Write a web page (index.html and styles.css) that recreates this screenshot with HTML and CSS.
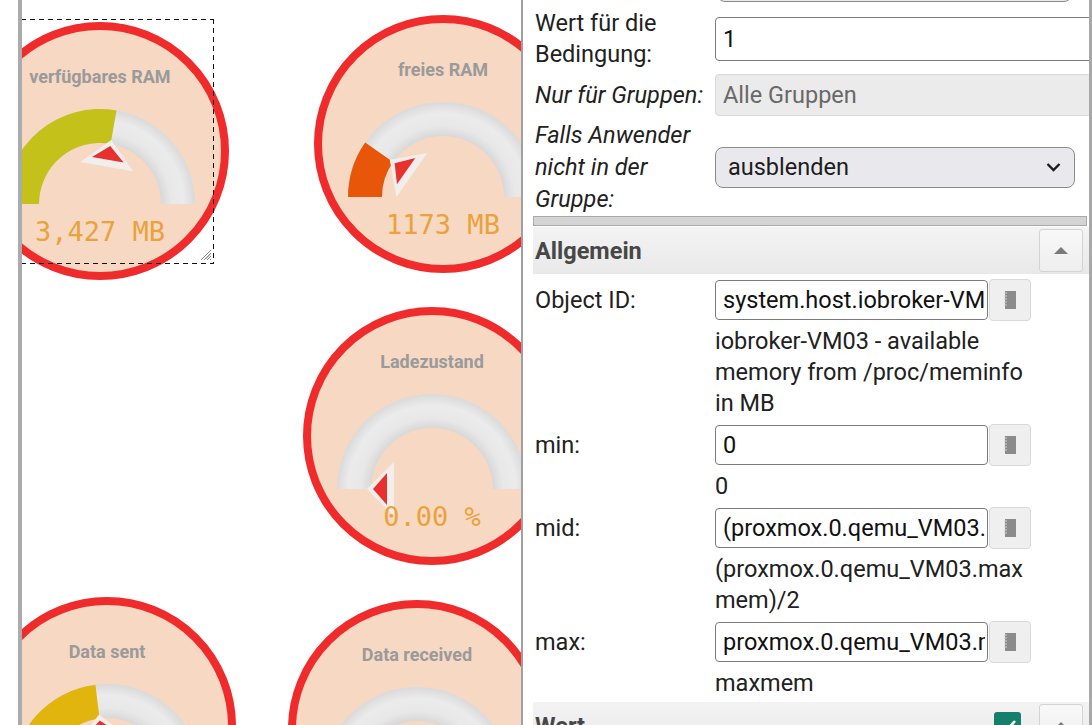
FILE: index.html
```html
<!DOCTYPE html>
<html lang="de">
<head>
    <meta charset="UTF-8">
    <title>vis Editor - Gauges</title>
    <link rel="stylesheet" href="styles.css">
</head>
<body>
    <svg class="defs" width="0" height="0" aria-hidden="true">
        <defs>
            <radialGradient id="track" gradientUnits="userSpaceOnUse" cx="95" cy="95" r="95">
                <stop offset="0.64" stop-color="#d8d8d8"/>
                <stop offset="0.75" stop-color="#e8e8e8"/>
                <stop offset="0.88" stop-color="#ebebeb"/>
                <stop offset="1" stop-color="#dadada"/>
            </radialGradient>
        </defs>
    </svg>

    <div class="gutter"></div>
    <div class="rail"></div>

    <!-- widget canvas -->
    <div class="canvas">
        <div class="gauge g1">
            <div class="gauge-title">verfügbares RAM</div>
            <svg class="gauge-arc" width="190" height="95" viewBox="0 0 190 95">
                <path class="track" d="M0 95 A95 95 0 0 1 190 95 L156 95 A61 61 0 0 0 34 95 Z"/>
                <path fill="#c5c11b" d="M0 95 A95 95 0 0 1 111.5 1.4 L105.6 34.9 A61 61 0 0 0 34 95 Z"/>
                <g transform="rotate(10 95 95)">
                    <polygon class="needle-halo" points="95,30 68,57 122,57"/>
                    <polygon class="needle" points="95,36 79,50 111,50"/>
                </g>
            </svg>
            <div class="gauge-value">3,427 MB</div>
        </div>

        <div class="gauge g2">
            <div class="gauge-title">freies RAM</div>
            <svg class="gauge-arc" width="190" height="95" viewBox="0 0 190 95">
                <path class="track" d="M0 95 A95 95 0 0 1 190 95 L156 95 A61 61 0 0 0 34 95 Z"/>
                <path fill="#e8560a" d="M0 95 A95 95 0 0 1 17.2 40.5 L45 60 A61 61 0 0 0 34 95 Z"/>
                <g transform="rotate(-55 95 95)">
                    <polygon class="needle-halo" points="95,30 68,57 122,57"/>
                    <polygon class="needle" points="95,36 79,50 111,50"/>
                </g>
            </svg>
            <div class="gauge-value">1173 MB</div>
        </div>

        <div class="gauge g3">
            <div class="gauge-title">Ladezustand</div>
            <svg class="gauge-arc" width="190" height="95" viewBox="0 0 190 95">
                <path class="track" d="M0 95 A95 95 0 0 1 190 95 L156 95 A61 61 0 0 0 34 95 Z"/>
                <g transform="rotate(-90 95 95)">
                    <polygon class="needle-halo" points="95,30 68,57 122,57"/>
                    <polygon class="needle" points="95,36 79,50 111,50"/>
                </g>
            </svg>
            <div class="gauge-value">0.00 %</div>
        </div>

        <div class="gauge g4">
            <div class="gauge-title">Data sent</div>
            <svg class="gauge-arc" width="190" height="95" viewBox="0 0 190 95">
                <path class="track" d="M0 95 A95 95 0 0 1 190 95 L156 95 A61 61 0 0 0 34 95 Z"/>
                <path fill="#e2b50e" d="M0 95 A95 95 0 0 1 83.4 0.7 L87.6 34.5 A61 61 0 0 0 34 95 Z"/>
                <g transform="rotate(-7 95 95)">
                    <polygon class="needle-halo" points="95,30 68,57 122,57"/>
                    <polygon class="needle" points="95,36 79,50 111,50"/>
                </g>
            </svg>
            <div class="gauge-value">0 kB</div>
        </div>

        <div class="gauge g5">
            <div class="gauge-title">Data received</div>
            <svg class="gauge-arc" width="190" height="95" viewBox="0 0 190 95">
                <path class="track" d="M0 95 A95 95 0 0 1 190 95 L156 95 A61 61 0 0 0 34 95 Z"/>
                <g transform="rotate(-80 95 95)">
                    <polygon class="needle-halo" points="95,30 68,57 122,57"/>
                    <polygon class="needle" points="95,36 79,50 111,50"/>
                </g>
            </svg>
            <div class="gauge-value">0 kB</div>
        </div>

        <!-- selected widget frame -->
        <div class="selection">
            <svg class="resize-handle" width="12" height="12" viewBox="0 0 12 12">
                <path d="M11 1 L1 11 M11 4 L4 11 M11 7 L7 11 M11 10 L10 11 M9 3 L3 9 M10 5.5 L5.5 10" stroke="#8a8a8a" stroke-width="1"/>
            </svg>
        </div>
    </div>

    <!-- attributes panel -->
    <div class="panel">
        <div class="row row-cut">
            <span></span>
            <div class="select select-cut"></div>
        </div>

        <div class="row row-cond">
            <label class="label">Wert für die<br>Bedingung:</label>
            <input class="input input-wide" type="text" value="1">
        </div>

        <div class="row row-groups">
            <label class="label italic">Nur für Gruppen:</label>
            <input class="input input-wide input-disabled" type="text" value="Alle Gruppen" disabled>
        </div>

        <div class="row row-hide">
            <label class="label italic">Falls Anwender<br>nicht in der<br>Gruppe:</label>
            <div class="select select-hide">
                <span>ausblenden</span>
                <svg width="15" height="10" viewBox="0 0 15 10">
                    <polyline points="1.5,2 7.5,8 13.5,2" fill="none" stroke="#1c1c1c" stroke-width="2.4"/>
                </svg>
            </div>
        </div>

        <div class="bar"></div>

        <div class="section">
            <span class="section-title">Allgemein</span>
            <span class="toggle"><span class="caret"></span></span>
        </div>

        <div class="field">
            <div class="row">
                <label class="label">Object ID:</label>
                <div class="control">
                    <input class="input input-id" type="text" value="system.host.iobroker-VM03.mem.available">
                    <span class="picker">
                        <svg width="14" height="20" viewBox="0 0 14 20">
                            <rect x="2" y="1" width="11" height="18" fill="#8b8b8b"/>
                            <path d="M1 3h3M1 6h3M1 9h3M1 12h3M1 15h3" stroke="#d0d0d0" stroke-width="1"/>
                        </svg>
                    </span>
                </div>
            </div>
            <div class="hint">iobroker-VM03 - available<br>memory from /proc/meminfo<br>in MB</div>
        </div>

        <div class="field">
            <div class="row">
                <label class="label">min:</label>
                <div class="control">
                    <input class="input input-id" type="text" value="0">
                    <span class="picker">
                        <svg width="14" height="20" viewBox="0 0 14 20">
                            <rect x="2" y="1" width="11" height="18" fill="#8b8b8b"/>
                            <path d="M1 3h3M1 6h3M1 9h3M1 12h3M1 15h3" stroke="#d0d0d0" stroke-width="1"/>
                        </svg>
                    </span>
                </div>
            </div>
            <div class="hint">0</div>
        </div>

        <div class="field">
            <div class="row">
                <label class="label">mid:</label>
                <div class="control">
                    <input class="input input-id" type="text" value="(proxmox.0.qemu_VM03.maxmem)/2">
                    <span class="picker">
                        <svg width="14" height="20" viewBox="0 0 14 20">
                            <rect x="2" y="1" width="11" height="18" fill="#8b8b8b"/>
                            <path d="M1 3h3M1 6h3M1 9h3M1 12h3M1 15h3" stroke="#d0d0d0" stroke-width="1"/>
                        </svg>
                    </span>
                </div>
            </div>
            <div class="hint">(proxmox.0.qemu_VM03.max<br>mem)/2</div>
        </div>

        <div class="field">
            <div class="row">
                <label class="label">max:</label>
                <div class="control">
                    <input class="input input-id" type="text" value="proxmox.0.qemu_VM03.maxmem">
                    <span class="picker">
                        <svg width="14" height="20" viewBox="0 0 14 20">
                            <rect x="2" y="1" width="11" height="18" fill="#8b8b8b"/>
                            <path d="M1 3h3M1 6h3M1 9h3M1 12h3M1 15h3" stroke="#d0d0d0" stroke-width="1"/>
                        </svg>
                    </span>
                </div>
            </div>
            <div class="hint">maxmem</div>
        </div>

        <div class="section section-wert">
            <span class="section-title">Wert</span>
            <span class="check">
                <svg width="18" height="14" viewBox="0 0 18 14">
                    <polyline points="2,7 7,12 16,2" fill="none" stroke="#ffffff" stroke-width="2.6"/>
                </svg>
            </span>
            <span class="toggle"><span class="caret"></span></span>
        </div>
    </div>
</body>
</html>
```

FILE: styles.css
```css
body {
    margin: 0;
    height: 725px;
    display: flex;
    overflow: hidden;
    background-color: #ffffff;
    font-family: Roboto, "Noto Sans", sans-serif;
}

.defs {
    position: absolute;
}

.gutter {
    width: 18px;
    flex: none;
}

.rail {
    width: 4px;
    flex: none;
    background-color: #ababab;
}

/* widget canvas */
.canvas {
    position: relative;
    width: 499px;
    flex: none;
    overflow: hidden;
}

.gauge {
    position: absolute;
    width: 258px;
    height: 258px;
    box-sizing: border-box;
    border: 8px solid #f02b2b;
    border-radius: 50%;
    background-color: #f6d8c3;
    display: flex;
    flex-direction: column;
    align-items: center;
    padding-top: 37px;
}

.g1 { left: -51px; top: 22px; }
.g2 { left: 292px; top: 15px; }
.g3 { left: 281px; top: 307px; }
.g4 { left: -44px; top: 597px; }
.g5 { left: 266px; top: 600px; }

.gauge-title {
    font-size: 18px;
    line-height: 20px;
    font-weight: 700;
    color: #9a9a9a;
    white-space: nowrap;
}

.gauge-arc {
    margin-top: 22px;
    overflow: visible;
    flex: none;
}

.track {
    fill: url(#track);
}

.needle-halo {
    fill: #f1eeec;
}

.needle {
    fill: #e8302f;
}

.gauge-value {
    margin-top: 13px;
    font-family: "DejaVu Sans Mono", monospace;
    font-size: 27px;
    line-height: 30px;
    color: #e9a23c;
    white-space: nowrap;
}

.selection {
    position: absolute;
    left: -10px;
    top: 19px;
    width: 202px;
    height: 245px;
    background:
        repeating-linear-gradient(90deg, #111 0 5px, transparent 5px 9px) top left / 100% 1px no-repeat,
        repeating-linear-gradient(90deg, #111 0 5px, transparent 5px 9px) bottom left / 100% 1px no-repeat,
        repeating-linear-gradient(180deg, #111 0 5px, transparent 5px 9px) top right / 1px 100% no-repeat;
}

.resize-handle {
    position: absolute;
    right: 2px;
    bottom: 3px;
}

/* attributes panel */
.panel {
    width: 571px;
    flex: none;
    box-sizing: border-box;
    border-left: 2px solid #a0a0a0;
    border-right: 3px solid #a8a8a8;
    padding-left: 10px;
    overflow: hidden;
    color: #212121;
    font-size: 23.5px;
}

.row {
    display: grid;
    grid-template-columns: 182px 1fr;
    align-items: center;
}

.label {
    padding-left: 2px;
    line-height: 31px;
    white-space: nowrap;
}

.italic {
    font-style: italic;
}

.row-cut { margin-top: -40px; }
.row-cond { margin-top: 6px; }
.row-groups { margin-top: 4px; }
.row-hide { margin-top: 3px; }

.row-hide .label {
    line-height: 32px;
}

.select {
    height: 41px;
    width: 360px;
    box-sizing: border-box;
    border: 1.5px solid #8a8a8a;
    border-radius: 8px;
    background-color: #e9e9ed;
    display: flex;
    align-items: center;
    justify-content: space-between;
    padding: 0 13px 0 12px;
    color: #1c1c1c;
}

.select-cut {
    height: 42px;
    width: 355px;
    margin-left: 2px;
}

.input {
    font: inherit;
    height: 44px;
    box-sizing: border-box;
    border: 1px solid #7a7a7a;
    border-radius: 4px;
    padding: 0 2px 0 7px;
    color: #111111;
    background-color: #ffffff;
    outline: none;
}

.input-wide {
    width: 400px;
}

.input-disabled {
    height: 42px;
    background-color: #ebebeb;
    border-color: #d9d9d9;
    color: #686868;
}

.bar {
    margin: 1px 2px 0 0;
    height: 10px;
    box-sizing: border-box;
    border: 1px solid #a9a9a9;
    background-color: #d4d4d4;
}

.section {
    margin-top: 1px;
    height: 47px;
    display: flex;
    align-items: center;
    padding: 0 6px 0 2px;
    background: linear-gradient(#f3f3f3, #e9e9e9);
}

.section-title {
    flex: 1;
    font-weight: 700;
    color: #474747;
}

.toggle {
    width: 44px;
    height: 43px;
    box-sizing: border-box;
    border: 1px solid #d3d3d3;
    border-radius: 3px;
    background: linear-gradient(#f8f8f8, #eeeeee);
    display: flex;
    align-items: center;
    justify-content: center;
}

.caret {
    width: 0;
    height: 0;
    border-left: 7px solid transparent;
    border-right: 7px solid transparent;
    border-bottom: 7px solid #7a7a7a;
}

.field {
    margin-top: 6px;
}

.control {
    display: flex;
    align-items: center;
}

.input-id {
    width: 273px;
    height: 40px;
}

.picker {
    width: 42px;
    height: 42px;
    margin: -1px 0 -1px 1px;
    box-sizing: border-box;
    border: 1px solid #d9d9d9;
    border-radius: 4px;
    background-color: #efefef;
    display: flex;
    align-items: center;
    justify-content: center;
}

.hint {
    margin-top: 6px;
    padding-left: 182px;
    line-height: 31px;
    white-space: nowrap;
}

.section-wert {
    margin-top: 3px;
}

.check {
    width: 27px;
    height: 27px;
    margin-right: 18px;
    border-radius: 3px;
    background-color: #167f6c;
    display: flex;
    align-items: center;
    justify-content: center;
}
```
